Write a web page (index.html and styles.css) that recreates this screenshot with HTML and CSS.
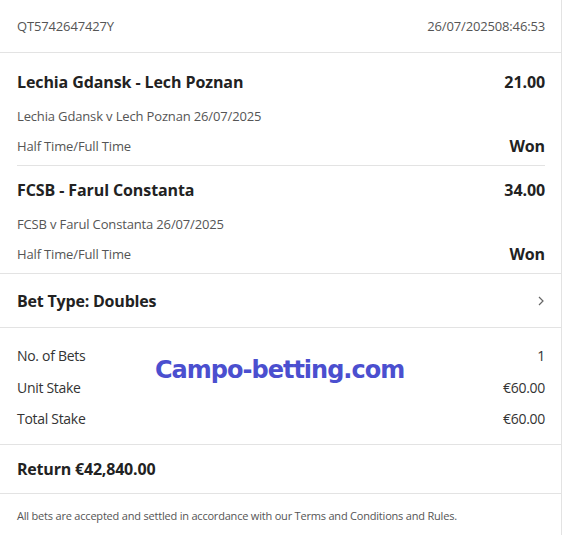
FILE: index.html
```html
<!DOCTYPE html>
<html lang="en">
<head>
    <meta charset="UTF-8">
    <meta name="viewport" content="width=device-width, initial-scale=1.0">
    <title>Bet Receipt</title>
    <link rel="stylesheet" href="styles.css">
</head>
<body>
    <div class="receipt">
        <!-- Header -->
        <div class="receipt-header">
            <span>QT5742647427Y</span>
            <span>26/07/202508:46:53</span>
        </div>

        <!-- Selections -->
        <div class="legs">
            <div class="leg">
                <div class="leg-row">
                    <span class="leg-title">Lechia Gdansk - Lech Poznan</span>
                    <span class="leg-odds">21.00</span>
                </div>
                <div class="leg-row">
                    <span class="leg-sub">Lechia Gdansk v Lech Poznan 26/07/2025</span>
                </div>
                <div class="leg-row">
                    <span class="leg-sub">Half Time/Full Time</span>
                    <span class="leg-result">Won</span>
                </div>
            </div>
            <div class="leg">
                <div class="leg-row">
                    <span class="leg-title">FCSB - Farul Constanta</span>
                    <span class="leg-odds">34.00</span>
                </div>
                <div class="leg-row">
                    <span class="leg-sub">FCSB v Farul Constanta 26/07/2025</span>
                </div>
                <div class="leg-row">
                    <span class="leg-sub">Half Time/Full Time</span>
                    <span class="leg-result">Won</span>
                </div>
            </div>
        </div>

        <!-- Bet type -->
        <div class="bet-type">
            <span>Bet Type: Doubles</span>
            <svg class="chevron" width="8" height="12" viewBox="0 0 8 12">
                <path d="M2 2 L6 6 L2 10" fill="none" stroke="#666" stroke-width="1.2"/>
            </svg>
        </div>

        <!-- Stakes -->
        <div class="summary">
            <div class="summary-row"><span>No. of Bets</span><span>1</span></div>
            <div class="summary-row"><span>Unit Stake</span><span>€60.00</span></div>
            <div class="summary-row"><span>Total Stake</span><span>€60.00</span></div>
            <div class="watermark">Campo-betting.com</div>
        </div>

        <!-- Return -->
        <div class="return">Return €42,840.00</div>

        <!-- Footer -->
        <div class="terms">All bets are accepted and settled in accordance with our Terms and Conditions and Rules.</div>
    </div>
</body>
</html>
```

FILE: styles.css
```css
/* Reset */
body {
    margin: 0;
    padding: 0;
    background: #fff;
    font-family: "Open Sans", "Noto Sans", sans-serif;
    color: #222;
}

/* Receipt card */
.receipt {
    width: 561px;
    border-right: 1px solid #e3e3e3;
    background: #fff;
}

.receipt-header {
    display: flex;
    justify-content: space-between;
    align-items: center;
    height: 52px;
    padding: 0 16px 0 17px;
    border-bottom: 1px solid #e3e3e3;
    font-size: 13px;
    color: #555;
    letter-spacing: -0.15px;
}

/* Legs */
.legs {
    border-bottom: 1px solid #e3e3e3;
}

.leg {
    margin: 0 16px 0 17px;
    padding: 17px 0 4px;
}

.leg + .leg {
    border-top: 1px solid #e3e3e3;
    padding-top: 12px;
}

.leg-row {
    display: flex;
    justify-content: space-between;
    align-items: center;
    height: 30px;
}

.leg-row:first-child {
    height: 24px;
    margin-bottom: 7px;
}

.leg-title,
.leg-odds,
.leg-result {
    font-size: 16px;
    font-weight: 700;
    letter-spacing: -0.1px;
}

.leg-sub {
    font-size: 13px;
    color: #555;
    letter-spacing: -0.15px;
}

/* Bet type */
.bet-type {
    display: flex;
    justify-content: space-between;
    align-items: center;
    height: 53px;
    padding: 0 16px 0 17px;
    border-bottom: 1px solid #e3e3e3;
    font-size: 16px;
    font-weight: 700;
    letter-spacing: -0.2px;
}

/* Summary */
.summary {
    position: relative;
    padding: 12px 16px 9px 17px;
    border-bottom: 1px solid #e3e3e3;
}

.summary-row {
    display: flex;
    justify-content: space-between;
    align-items: center;
    height: 31.5px;
    font-size: 14px;
    color: #333;
    letter-spacing: -0.3px;
}

.watermark {
    position: absolute;
    left: 155px;
    top: 28px;
    font-family: "DejaVu Sans", sans-serif;
    font-size: 24px;
    font-weight: 700;
    color: #4b4fcf;
    letter-spacing: -1px;
}

/* Return */
.return {
    display: flex;
    align-items: center;
    height: 47px;
    padding: 1px 17px 0;
    border-bottom: 1px solid #e3e3e3;
    font-size: 16px;
    font-weight: 700;
    letter-spacing: -0.2px;
}

/* Footer */
.terms {
    padding: 14px 17px;
    font-size: 11px;
    color: #555;
    letter-spacing: -0.2px;
}
```
